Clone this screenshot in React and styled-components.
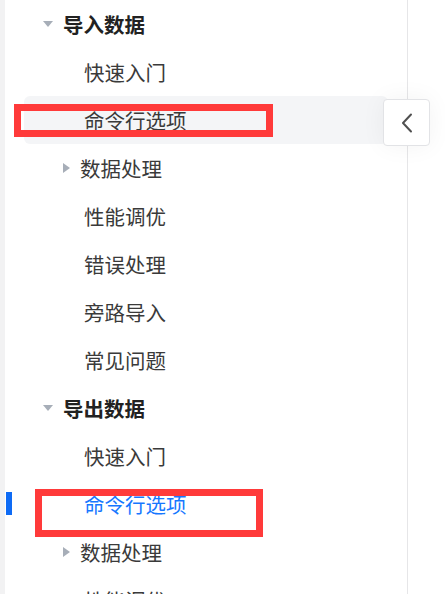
import styled, { createGlobalStyle } from "styled-components";

const GlobalStyle = createGlobalStyle`
  html, body {
    margin: 0;
    padding: 0;
    background: #fff;
    overflow: hidden;
  }
  body {
    font-family: "Noto Sans CJK SC", "Noto Sans", sans-serif;
  }
`;

const Page = styled.div`
  position: relative;
  width: 445px;
  height: 594px;
  overflow: hidden;
  display: flex;
  align-items: flex-start;
`;

const Sidebar = styled.nav`
  box-sizing: border-box;
  width: 408px;
  min-height: 100%;
  flex-shrink: 0;
  border-left: 5px solid #f2f2f3;
  border-right: 1px solid #e6e6e8;
  display: flex;
  flex-direction: column;
`;

const Row = styled.div`
  position: relative;
  flex-shrink: 0;
  height: 48px;
  margin: 0 19px;
  display: flex;
  align-items: center;
  gap: 10px;
  padding-left: ${(p) => p.$indent}px;
  border-radius: 6px;
  background: ${(p) => (p.$hover ? "#f4f5f7" : "transparent")};
  font-size: 20.5px;
  line-height: 1;
  font-weight: ${(p) => (p.$group ? 700 : 400)};
  color: ${(p) => (p.$active ? "#1677ff" : p.$group ? "#222" : "#3a3a3a")};

  ${(p) =>
    p.$active &&
    `
    &::before {
      content: "";
      position: absolute;
      left: -18px;
      top: 12px;
      width: 6px;
      height: 23px;
      background: #0e6bf5;
    }
  `}
`;

const Caret = styled.span`
  width: 0;
  height: 0;
  flex-shrink: 0;
  ${(p) =>
    p.$open
      ? `
    border-left: 5px solid transparent;
    border-right: 5px solid transparent;
    border-top: 6px solid #a7aeb8;
  `
      : `
    border-top: 5px solid transparent;
    border-bottom: 5px solid transparent;
    border-left: 7px solid #a7aeb8;
  `}
`;

const Label = styled.span`
  white-space: nowrap;
`;

const Main = styled.div`
  flex: 1;
  align-self: stretch;
  background: #fff;
`;

const CollapseButton = styled.button`
  position: absolute;
  left: 383px;
  top: 99px;
  width: 47px;
  height: 47px;
  box-sizing: border-box;
  padding: 0;
  border: 1px solid #e2e3e6;
  border-radius: 4px;
  background: #fff;
  box-shadow: 0 0 24px rgba(0, 0, 0, 0.05);
  display: flex;
  align-items: center;
  justify-content: center;
  color: #555;
`;

const Annotation = styled.div`
  position: absolute;
  box-sizing: border-box;
  left: ${(p) => p.$x}px;
  top: ${(p) => p.$y}px;
  width: ${(p) => p.$w}px;
  height: ${(p) => p.$h}px;
  border: 7px solid #ff3a3a;
  pointer-events: none;
`;

const items = [
  { label: "导入数据", type: "group", open: true },
  { label: "快速入门" },
  { label: "命令行选项", hover: true },
  { label: "数据处理", type: "sub" },
  { label: "性能调优" },
  { label: "错误处理" },
  { label: "旁路导入" },
  { label: "常见问题" },
  { label: "导出数据", type: "group", open: true },
  { label: "快速入门" },
  { label: "命令行选项", active: true },
  { label: "数据处理", type: "sub" },
  { label: "性能调优" },
];

function NavRow({ item }) {
  const isGroup = item.type === "group";
  const isSub = item.type === "sub";
  const indent = isGroup ? 19 : isSub ? 39 : 60;

  return (
    <Row
      $indent={indent}
      $group={isGroup}
      $hover={item.hover}
      $active={item.active}
    >
      {(isGroup || isSub) && <Caret $open={item.open} />}
      <Label>{item.label}</Label>
    </Row>
  );
}

export default function App() {
  return (
    <>
      <GlobalStyle />
      <Page>
        <Sidebar>
          {items.map((item, i) => (
            <NavRow key={i} item={item} />
          ))}
        </Sidebar>
        <Main />

        <CollapseButton aria-label="收起">
          <svg width="12" height="20" viewBox="0 0 12 20" fill="none">
            <polyline
              points="10,1.5 2,10 10,18.5"
              stroke="#505050"
              strokeWidth="2"
              strokeLinecap="round"
              strokeLinejoin="round"
            />
          </svg>
        </CollapseButton>

        <Annotation $x={14} $y={104} $w={259} $h={33} />
        <Annotation $x={35} $y={489} $w={228} $h={48} />
      </Page>
    </>
  );
}
